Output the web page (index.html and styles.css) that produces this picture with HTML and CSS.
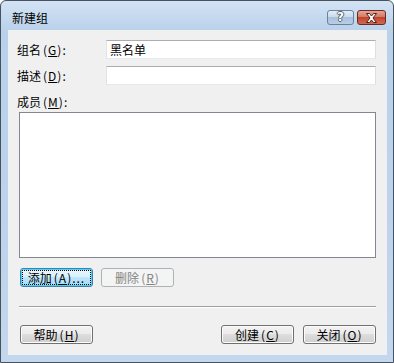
FILE: index.html
```html
<!DOCTYPE html>
<html>
<head>
    <meta charset="UTF-8">
    <title>新建组</title>
    <link rel="stylesheet" href="styles.css">
</head>
<body>
    <div class="window">
        <div class="titlebar">
            <span class="title">新建组</span>
            <div class="caption-buttons">
                <span class="cap-btn help">?</span>
                <span class="cap-btn close">
                    <svg width="13" height="10" viewBox="0 0 13 10">
                        <path d="M1.5 0.5 H4.5 L6.5 3 L8.5 0.5 H11.5 L8 5 L11.5 9.5 H8.5 L6.5 7 L4.5 9.5 H1.5 L5 5 Z" fill="#fff" stroke="#4b1f1a" stroke-width="1" stroke-linejoin="round"/>
                    </svg>
                </span>
            </div>
        </div>

        <div class="client">
            <div class="field-row">
                <label class="field-label">组名<span class="mn">(<u>G</u>):</span></label>
                <div class="textbox">黑名单</div>
            </div>
            <div class="field-row">
                <label class="field-label">描述<span class="mn">(<u>D</u>):</span></label>
                <div class="textbox"></div>
            </div>

            <label class="field-label members-label">成员<span class="mn">(<u>M</u>):</span></label>
            <div class="listbox"></div>

            <div class="btn-row">
                <button class="btn focused"><span class="focus-rect">添加<span class="mn">(<u>A</u>)...</span></span></button>
                <button class="btn" disabled>删除<span class="mn">(<u>R</u>)</span></button>
            </div>

            <div class="separator"></div>

            <div class="btn-row bottom-row">
                <button class="btn">帮助<span class="mn">(<u>H</u>)</span></button>
                <div class="spacer"></div>
                <button class="btn">创建<span class="mn">(<u>C</u>)</span></button>
                <button class="btn">关闭<span class="mn">(<u>O</u>)</span></button>
            </div>
        </div>
    </div>
</body>
</html>
```

FILE: styles.css
```css
* {
    box-sizing: border-box;
}

body {
    margin: 0;
    background-color: #ffffff;
    font-family: "Noto Sans CJK SC", "Liberation Sans", sans-serif;
    font-size: 12px;
    color: #000;
}

.window {
    width: 394px;
    height: 363px;
    border: 1px solid #46535f;
    border-radius: 6px 6px 0 0;
    background: linear-gradient(#d3e3f4, #b9d1ea 30px, #bcd3eb 60%, #c3d8ee);
    padding: 0 6px 7px 7px;
    display: flex;
    flex-direction: column;
}

.titlebar {
    height: 29px;
    display: flex;
    justify-content: space-between;
    align-items: flex-start;
}

.title {
    margin: 9px 0 0 4px;
    line-height: 16px;
    font-size: 12px;
}

.caption-buttons {
    display: flex;
    gap: 3px;
    margin: 9px 1px 0 0;
}

.cap-btn {
    height: 15px;
    border-radius: 3px;
    display: flex;
    align-items: center;
    justify-content: center;
}

.help {
    width: 27px;
    border: 1px solid #6d8199;
    background: linear-gradient(#e4edf7, #c9dbee 45%, #a9c1dd 50%, #b8cfe8);
    color: #fff;
    font-family: "DejaVu Sans", sans-serif;
    font-weight: bold;
    font-size: 12px;
    line-height: 13px;
    text-shadow: -1px 0 #53606e, 1px 0 #53606e, 0 -1px #53606e, 0 1px #53606e;
}

.close {
    width: 29px;
    border: 1px solid #6e2a22;
    background: linear-gradient(#e8a493, #d47a65 45%, #c2442c 50%, #cf6a53);
}

.client {
    flex: 1;
    background-color: #f0f0f0;
    padding: 10px 11px 0;
    display: flex;
    flex-direction: column;
}

.field-row {
    display: flex;
    align-items: center;
    height: 19px;
}

.field-row + .field-row {
    margin-top: 7px;
}

.field-label {
    width: 89px;
    margin-left: -2px;
    line-height: 16px;
}

/* mnemonic part: spaced out like the dialog font */
.mn {
    margin-left: 2px;
    letter-spacing: 1px;
}

.field-label u,
.btn u {
    text-decoration-thickness: 1px;
    text-underline-offset: 1px;
}

.textbox {
    width: 270px;
    height: 19px;
    border: 1px solid;
    border-color: #abadb3 #dbdfe6 #e3e9ef #e2e3ea;
    background-color: #fff;
    padding: 0 3px;
    line-height: 17px;
}

.members-label {
    margin-top: 9px;
}

.listbox {
    margin-top: 2px;
    height: 146px;
    border: 1px solid #828790;
    background-color: #fff;
}

.btn-row {
    display: flex;
    gap: 8px;
    margin-top: 10px;
    padding-left: 1px;
}

.btn {
    width: 73px;
    height: 19px;
    padding: 0;
    border: 1px solid #707070;
    border-radius: 3px;
    background: linear-gradient(#f2f2f2, #ebebeb 50%, #dddddd 50%, #cfcfcf);
    box-shadow: inset 0 0 0 1px #fcfcfc;
    font-family: "Noto Sans CJK SC", "Liberation Sans", sans-serif;
    font-size: 12px;
    line-height: 15px;
    color: #000;
    display: flex;
    align-items: center;
    justify-content: center;
}

.btn.focused {
    border-color: #3c7fb1;
    box-shadow: inset 0 0 0 1px #48d4f8;
    background: linear-gradient(#eaf6fd, #d9f0fc 50%, #bee6fd 50%, #a7d9f5);
    padding: 2px;
}

.focus-rect {
    width: 100%;
    height: 100%;
    outline: 1px dotted #000;
    display: flex;
    align-items: center;
    justify-content: center;
}

.btn:disabled {
    border-color: #adb2b5;
    background: #f4f4f4;
    box-shadow: none;
    color: #838383;
}

.separator {
    margin-top: 19px;
    height: 1px;
    background-color: #a0a0a0;
    box-shadow: 0 1px 0 #ffffff;
}

.bottom-row {
    margin-top: 18px;
    gap: 9px;
}

.spacer {
    flex: 1;
}
```
